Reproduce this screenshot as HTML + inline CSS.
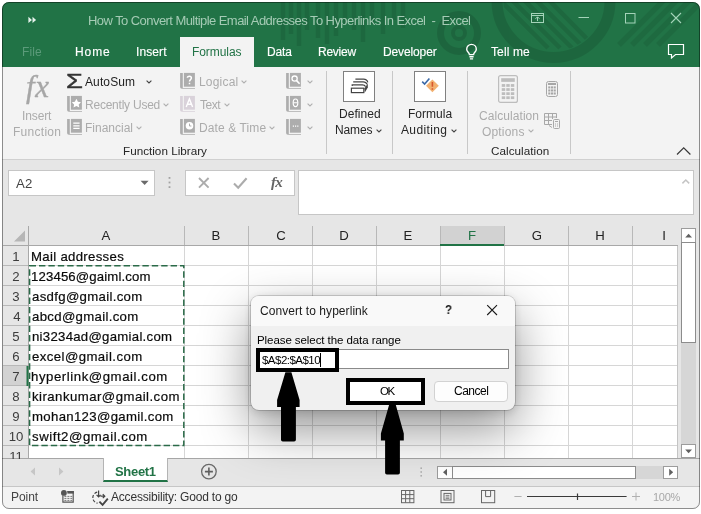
<!DOCTYPE html>
<html lang="en"><head><meta charset="utf-8"><title>How To Convert Multiple Email Addresses To Hyperlinks In Excel - Excel</title>
<style>
html,body{margin:0;padding:0;background:#fff;overflow:hidden;}
body{width:701px;height:514px;position:relative;overflow:hidden;font-family:"Liberation Sans",sans-serif;}
#win{position:absolute;left:0;top:0;width:701px;height:514px;overflow:hidden;clip-path:inset(2px 1px 5px 2px round 7px);background:#e6e6e6;}
#win div,#win span,#win svg{position:absolute;}
#win span{will-change:transform;}
#frame{position:absolute;left:2px;top:2px;width:696px;height:505px;border:1px solid rgba(0,0,0,.42);border-radius:7px;pointer-events:none;z-index:50;}
.w{background:#fff;border:1px solid #c6c6c6;box-sizing:border-box;}
.sb{background:#fff;border:1px solid #9c9c9c;box-sizing:border-box;}
</style></head><body>
<div id="win">
<div style="left:0px;top:0px;width:701px;height:67px;background:#217346;"></div>
<svg style="left:0px;top:0px;" width="701" height="67" viewBox="0 0 701 67">
<defs><clipPath id="cc"><circle cx="553.5" cy="1" r="50"/></clipPath></defs>
<g fill="none" stroke="#000" opacity="0.11">
<circle cx="553.5" cy="1" r="56.5" stroke-width="11"/>
<circle cx="459" cy="33" r="18.5" stroke-width="7"/>
<circle cx="459" cy="33" r="6" stroke-width="4"/>
</g>
<g stroke="#000" opacity="0.09" stroke-width="4.5">
<path d="M283 2V40M291 2V34M299 2V46M307 2V30M318 2V38M327 2V44M336 2V36M345 2V24M354 2V30M363 2V42M372 2V24M383 2V34M394 2V20M403 2V28"/>
<path clip-path="url(#cc)" d="M500 0L548 48M510 -2L560 48M520 -4L572 48M530 -6L584 48M541 -8L596 48" />
<path d="M664 0L619 45M677 0L632 45M690 0L645 45M703 0L658 45" stroke-width="5.5" opacity="0.8"/>
</g></svg>
<svg style="left:27px;top:14px;" width="12" height="12" viewBox="0 0 12 12"><path d="M1.4 2.7L5 5.9L1.4 9.1ZM5.5 2.7L9.1 5.9L5.5 9.1Z" fill="#e4f1ea"/></svg>
<svg style="left:529px;top:11px;" width="17" height="14" viewBox="0 0 17 14"><g fill="none" stroke="#a4d3b9" stroke-width="1"><rect x="2.5" y="2.5" width="12" height="9"/><path d="M2.5 4.5H14.5M8.5 10V6M6.5 7.8L8.5 5.8L10.5 7.8"/></g></svg>
<svg style="left:577px;top:12px;" width="14" height="12" viewBox="0 0 14 12"><path d="M1.5 5.5H12" stroke="#a4d3b9" stroke-width="1" fill="none"/></svg>
<svg style="left:623.6px;top:11.8px;" width="13" height="13" viewBox="0 0 13 13"><rect x="1.5" y="1.5" width="9.5" height="9.5" stroke="#a4d3b9" stroke-width="1" fill="none"/></svg>
<svg style="left:668.6px;top:11.4px;" width="14" height="14" viewBox="0 0 14 14"><path d="M2 2L12 12M12 2L2 12" stroke="#a4d3b9" stroke-width="1.1" fill="none"/></svg>
<div style="left:180px;top:37px;width:74px;height:30px;background:#f3f3f3;"></div>
<svg style="left:464px;top:42px;" width="16" height="20" viewBox="0 0 16 20"><g fill="none" stroke="#fff" stroke-width="1.4"><path d="M5.4 12.6C5.4 10.6 2.7 9.8 2.7 7.2A4.8 4.8 0 0 1 12.3 7.2C12.3 9.8 9.6 10.6 9.6 12.6Z"/><path d="M5.4 14.7H9.6M5.9 16.9H9.1"/></g></svg>
<svg style="left:666px;top:42px;" width="20" height="18" viewBox="0 0 20 18"><path d="M2.5 2.5H17.5V12.5H9.5L5.5 16V12.5H2.5Z" fill="none" stroke="#fff" stroke-width="1.2"/></svg>
<div style="left:0px;top:67px;width:701px;height:92px;background:#f3f3f3;"></div>
<div style="left:0px;top:159px;width:701px;height:1px;background:#d0d0d0;"></div>
<div style="left:326px;top:71px;width:1px;height:83px;background:#c8c8c8;"></div>
<div style="left:392px;top:71px;width:1px;height:83px;background:#c8c8c8;"></div>
<div style="left:467px;top:71px;width:1px;height:83px;background:#c8c8c8;"></div>
<div style="left:570px;top:71px;width:1px;height:83px;background:#c8c8c8;"></div>
<svg style="left:145px;top:78.5px;" width="8" height="6" viewBox="0 0 8 6"><path d="M1.6 1.6L4 4L6.4 1.6" fill="none" stroke="#444" stroke-width="1.1"/></svg>
<svg style="left:162px;top:101.5px;" width="8" height="6" viewBox="0 0 8 6"><path d="M1.6 1.6L4 4L6.4 1.6" fill="none" stroke="#b0b0b0" stroke-width="1.1"/></svg>
<svg style="left:135px;top:124.5px;" width="8" height="6" viewBox="0 0 8 6"><path d="M1.6 1.6L4 4L6.4 1.6" fill="none" stroke="#b0b0b0" stroke-width="1.1"/></svg>
<svg style="left:240.2px;top:78.5px;" width="8" height="6" viewBox="0 0 8 6"><path d="M1.6 1.6L4 4L6.4 1.6" fill="none" stroke="#b0b0b0" stroke-width="1.1"/></svg>
<svg style="left:223px;top:101.5px;" width="8" height="6" viewBox="0 0 8 6"><path d="M1.6 1.6L4 4L6.4 1.6" fill="none" stroke="#b0b0b0" stroke-width="1.1"/></svg>
<svg style="left:268px;top:124.5px;" width="8" height="6" viewBox="0 0 8 6"><path d="M1.6 1.6L4 4L6.4 1.6" fill="none" stroke="#b0b0b0" stroke-width="1.1"/></svg>
<svg style="left:306px;top:78.5px;" width="8" height="6" viewBox="0 0 8 6"><path d="M1.6 1.6L4 4L6.4 1.6" fill="none" stroke="#b0b0b0" stroke-width="1.1"/></svg>
<svg style="left:306px;top:101.5px;" width="8" height="6" viewBox="0 0 8 6"><path d="M1.6 1.6L4 4L6.4 1.6" fill="none" stroke="#b0b0b0" stroke-width="1.1"/></svg>
<svg style="left:306px;top:124.5px;" width="8" height="6" viewBox="0 0 8 6"><path d="M1.6 1.6L4 4L6.4 1.6" fill="none" stroke="#b0b0b0" stroke-width="1.1"/></svg>
<svg style="left:375px;top:127.5px;" width="8" height="6" viewBox="0 0 8 6"><path d="M1.6 1.6L4 4L6.4 1.6" fill="none" stroke="#444" stroke-width="1.1"/></svg>
<svg style="left:450px;top:127.5px;" width="8" height="6" viewBox="0 0 8 6"><path d="M1.6 1.6L4 4L6.4 1.6" fill="none" stroke="#444" stroke-width="1.1"/></svg>
<svg style="left:527px;top:128px;" width="8" height="6" viewBox="0 0 8 6"><path d="M1.6 1.6L4 4L6.4 1.6" fill="none" stroke="#b0b0b0" stroke-width="1.1"/></svg>
<svg style="left:66.5px;top:95px;" width="16" height="18" viewBox="0 0 16 18"><path d="M0.1 0.9H2.8V15.9H15V16.8H1.9Q0.1 16.8 0.1 15Z" fill="#adadad"/><rect x="3.9" y="0.9" width="11" height="13.8" fill="#adadad"/><g transform="translate(0,1.2)"><path d="M9.4 2.6L10.9 5.6L14 6L11.7 8.2L12.3 11.3L9.4 9.8L6.5 11.3L7.1 8.2L4.8 6L7.9 5.6Z" fill="#fff"/></g></svg>
<svg style="left:66.5px;top:118px;" width="16" height="18" viewBox="0 0 16 18"><path d="M0.1 0.9H2.8V15.9H15V16.8H1.9Q0.1 16.8 0.1 15Z" fill="#adadad"/><rect x="3.9" y="0.9" width="11" height="13.8" fill="#adadad"/><g transform="translate(0,1.2)"><g fill="none" stroke="#fff" stroke-width="1.2"><path d="M6.3 4H12.6M6.3 6.6H12.6M6.3 9.2H12.6"/></g></g></svg>
<svg style="left:180px;top:72px;" width="16" height="18" viewBox="0 0 16 18"><path d="M0.1 0.9H2.8V15.9H15V16.8H1.9Q0.1 16.8 0.1 15Z" fill="#adadad"/><rect x="3.9" y="0.9" width="11" height="13.8" fill="#adadad"/><g transform="translate(0,1.2)"><path d="M7.4 4.6C7.4 2.6 11.4 2.6 11.4 4.8C11.4 6.4 9.5 6.4 9.5 8.2M9.5 9.6V11" fill="none" stroke="#fff" stroke-width="1.5"/></g></svg>
<svg style="left:180px;top:95px;" width="16" height="18" viewBox="0 0 16 18"><path d="M0.1 0.9H2.8V15.9H15V16.8H1.9Q0.1 16.8 0.1 15Z" fill="#d9d2da"/><rect x="3.9" y="0.9" width="11" height="13.8" fill="#d9d2da"/><g transform="translate(0,1.2)"><path d="M6.2 10.8L9.4 2.8L12.6 10.8M7.4 8H11.4" fill="none" stroke="#fff" stroke-width="1.4"/></g></svg>
<svg style="left:180px;top:118px;" width="16" height="18" viewBox="0 0 16 18"><path d="M0.1 0.9H2.8V15.9H15V16.8H1.9Q0.1 16.8 0.1 15Z" fill="#adadad"/><rect x="3.9" y="0.9" width="11" height="13.8" fill="#adadad"/><g transform="translate(0,1.2)"><circle cx="9.5" cy="6.5" r="3.8" fill="#fff"/><path d="M9.5 4.4V6.8H11.4" stroke="#adadad" stroke-width="1" fill="none"/></g></svg>
<svg style="left:286px;top:72px;" width="16" height="18" viewBox="0 0 16 18"><path d="M0.1 0.9H2.8V15.9H15V16.8H1.9Q0.1 16.8 0.1 15Z" fill="#adadad"/><rect x="3.9" y="0.9" width="11" height="13.8" fill="#adadad"/><g transform="translate(0,1.2)"><circle cx="8.6" cy="5.4" r="2.6" fill="none" stroke="#fff" stroke-width="1.3"/><path d="M10.6 7.4L13.6 10.6" stroke="#fff" stroke-width="1.6"/></g></svg>
<svg style="left:286px;top:95px;" width="16" height="18" viewBox="0 0 16 18"><path d="M0.1 0.9H2.8V15.9H15V16.8H1.9Q0.1 16.8 0.1 15Z" fill="#adadad"/><rect x="3.9" y="0.9" width="11" height="13.8" fill="#adadad"/><g transform="translate(0,1.2)"><ellipse cx="9.5" cy="6.6" rx="2.3" ry="3.8" fill="none" stroke="#fff" stroke-width="1.2"/><path d="M7.4 6.6H11.6" stroke="#fff" stroke-width="1.1"/></g></svg>
<svg style="left:286px;top:118px;" width="16" height="18" viewBox="0 0 16 18"><path d="M0.1 0.9H2.8V15.9H15V16.8H1.9Q0.1 16.8 0.1 15Z" fill="#adadad"/><rect x="3.9" y="0.9" width="11" height="13.8" fill="#adadad"/><g transform="translate(0,1.2)"><path d="M6.8 7H8M9 7H10.2M11.2 7H12.4" stroke="#fff" stroke-width="1.3"/></g></svg>
<div style="left:343px;top:71px;width:32px;height:31px;background:#fff;border:1px solid #808080;box-sizing:border-box;"></div>
<svg style="left:349px;top:76px;" width="20" height="18" viewBox="0 0 20 18"><g fill="none" stroke="#444" stroke-width="1.2"><rect x="2.4" y="12.2" width="12.4" height="4.4"/><path d="M3.2 10V8.8H13.4Q15.6 8.8 16.6 10.6M4.8 6.6V5.8H14.2Q17 5.8 18 8.2M6.4 3.2H14.6Q18 3.2 18.8 6.4"/></g><path d="M15.4 12.6L18.8 7.6V11.4L15.8 16.6Z" fill="#444"/></svg>
<div style="left:414px;top:71px;width:32px;height:31px;background:#fff;border:1px solid #808080;box-sizing:border-box;"></div>
<svg style="left:419px;top:75px;" width="22" height="20" viewBox="0 0 22 20"><path d="M3.2 6.6L5.6 9L10.4 3.4" fill="none" stroke="#3c6aa8" stroke-width="1.6"/><path d="M13.4 4.4L19.8 10.8L13.4 17.2L7 10.8Z" fill="#f2b070"/><path d="M13.4 7V11.8M13.4 13.2V14.8" stroke="#d8562c" stroke-width="1.6"/></svg>
<svg style="left:498px;top:75px;" width="20" height="28" viewBox="0 0 20 28"><rect x="0.6" y="0.6" width="18.8" height="26.8" rx="2" fill="none" stroke="#bdbdbd" stroke-width="1.2"/><rect x="3.2" y="3.2" width="13.6" height="3.64" fill="#bdbdbd"/><rect x="3.74" y="9.09" width="3.45" height="2.77" fill="#bdbdbd"/><rect x="8.28" y="9.09" width="3.45" height="2.77" fill="#bdbdbd"/><rect x="12.81" y="9.09" width="3.45" height="2.77" fill="#bdbdbd"/><rect x="3.74" y="13.16" width="3.45" height="2.77" fill="#bdbdbd"/><rect x="8.28" y="13.16" width="3.45" height="2.77" fill="#bdbdbd"/><rect x="12.81" y="13.16" width="3.45" height="2.77" fill="#bdbdbd"/><rect x="3.74" y="17.23" width="3.45" height="2.77" fill="#bdbdbd"/><rect x="8.28" y="17.23" width="3.45" height="2.77" fill="#bdbdbd"/><rect x="12.81" y="17.23" width="3.45" height="2.77" fill="#bdbdbd"/><rect x="3.74" y="21.30" width="3.45" height="2.77" fill="#bdbdbd"/><rect x="8.28" y="21.30" width="3.45" height="2.77" fill="#bdbdbd"/><rect x="12.81" y="21.30" width="3.45" height="2.77" fill="#bdbdbd"/></svg>
<svg style="left:546px;top:81px;" width="12" height="16" viewBox="0 0 12 16"><rect x="0.5" y="0.5" width="11" height="15" rx="2" fill="none" stroke="#a6a6a6" stroke-width="1"/><rect x="1.92" y="1.92" width="8.16" height="2.08" fill="#a6a6a6"/><rect x="2.25" y="5.39" width="2.07" height="2.07" fill="#a6a6a6"/><rect x="4.97" y="5.39" width="2.07" height="2.07" fill="#a6a6a6"/><rect x="7.69" y="5.39" width="2.07" height="2.07" fill="#a6a6a6"/><rect x="2.25" y="8.43" width="2.07" height="2.07" fill="#a6a6a6"/><rect x="4.97" y="8.43" width="2.07" height="2.07" fill="#a6a6a6"/><rect x="7.69" y="8.43" width="2.07" height="2.07" fill="#a6a6a6"/><rect x="2.25" y="11.47" width="2.07" height="2.07" fill="#a6a6a6"/><rect x="4.97" y="11.47" width="2.07" height="2.07" fill="#a6a6a6"/><rect x="7.69" y="11.47" width="2.07" height="2.07" fill="#a6a6a6"/></svg>
<svg style="left:544px;top:113px;" width="17" height="16" viewBox="0 0 17 16"><g fill="none" stroke="#a8a8a8" stroke-width="1"><path d="M0.5 0.5H12.5V5M0.5 0.5V11.5H8M0.5 4H12.5M0.5 7.5H8M4.5 0.5V11.5M8.5 0.5V6"/><rect x="9.5" y="6.5" width="6" height="9" rx="1" fill="#f3f3f3"/><path d="M11 8.5H14M11 11H12M13 11H14M11 13H12M13 13H14"/><path d="M5 12.5L8 14.5"/></g></svg>
<svg style="left:675px;top:145px;" width="18" height="12" viewBox="0 0 18 12"><path d="M2 9.5L8.7 2.8L15.4 9.5" fill="none" stroke="#3a3a3a" stroke-width="1.2"/></svg>
<div style="left:0px;top:160px;width:701px;height:66px;background:#e6e6e6;"></div>
<div class="w" style="left:8px;top:170px;width:147px;height:26px;"></div>
<svg style="left:139px;top:179px;" width="12" height="8" viewBox="0 0 12 8"><path d="M1.6 1.8H9.6L5.6 6Z" fill="#6a6a6a"/></svg>
<svg style="left:167px;top:175px;" width="5" height="16" viewBox="0 0 5 16"><g fill="#a2a2a2"><rect x="1.6" y="2" width="1.8" height="1.8"/><rect x="1.6" y="6.6" width="1.8" height="1.8"/><rect x="1.6" y="11.2" width="1.8" height="1.8"/></g></svg>
<div class="w" style="left:185px;top:170px;width:110px;height:26px;"></div>
<svg style="left:197px;top:176px;" width="14" height="14" viewBox="0 0 14 14"><path d="M2 2L11.6 11.6M11.6 2L2 11.6" stroke="#acacac" stroke-width="1.9" fill="none"/></svg>
<svg style="left:232px;top:176px;" width="17" height="14" viewBox="0 0 17 14"><path d="M2 7.6L6.2 11.8L14.6 2.2" stroke="#acacac" stroke-width="2.1" fill="none"/></svg>
<div class="w" style="left:298px;top:170px;width:396px;height:45px;"></div>
<svg style="left:681px;top:178px;" width="10" height="7" viewBox="0 0 10 7"><path d="M1.4 5.4L4.8 2L8.2 5.4" stroke="#c4c4c4" stroke-width="1.5" fill="none"/></svg>
<div style="left:28px;top:246px;width:650px;height:212px;background:#fff;"></div>
<svg style="left:0px;top:0px;" width="701" height="514" viewBox="0 0 701 514"><path d="M28 265.5H678M28 285.5H678M28 305.5H678M28 325.5H678M28 345.5H678M28 365.5H678M28 385.5H678M28 405.5H678M28 425.5H678M28 445.5H678M184.5 246V458M248.5 246V458M312.5 246V458M376.5 246V458M440.5 246V458M504.5 246V458M568.5 246V458M632.5 246V458" stroke="#d6d6d6" stroke-width="1" fill="none"/><rect x="440" y="226" width="64" height="19" fill="#d2d2d2"/><rect x="3" y="366" width="25" height="20" fill="#d2d2d2"/><path d="M3 265.5H28M3 285.5H28M3 305.5H28M3 325.5H28M3 345.5H28M3 365.5H28M3 385.5H28M3 405.5H28M3 425.5H28M3 445.5H28M184.5 226V245M248.5 226V245M312.5 226V245M376.5 226V245M440.5 226V245M504.5 226V245M568.5 226V245M632.5 226V245" stroke="#b8b8b8" stroke-width="1" fill="none"/><path d="M677.5 246V458" stroke="#c4c4c4" stroke-width="1" fill="none"/><path d="M28.5 226V458M3 245.5H678" stroke="#a8a8a8" stroke-width="1" fill="none"/><path d="M440 245H504" stroke="#217346" stroke-width="2" fill="none"/><path d="M27.5 366V386" stroke="#217346" stroke-width="2" fill="none"/><path d="M25 230.5V241.5H14Z" fill="#b6b6b6"/><rect x="29.6" y="265.7" width="154.2" height="179.8" fill="none" stroke="#2a6a48" stroke-width="1.5" stroke-dasharray="6.4 3"/></svg>
<div style="left:681px;top:242px;width:15px;height:203px;background:#d6d6d6;"></div>
<div class="sb" style="left:681px;top:228px;width:15px;height:15px;"></div>
<svg style="left:684px;top:232px;" width="10" height="7" viewBox="0 0 10 7"><path d="M1.2 5.6H8L4.6 1.8Z" fill="#606060"/></svg>
<div class="sb" style="left:681px;top:242px;width:15px;height:101px;border-color:#8c8c8c;"></div>
<div class="sb" style="left:681px;top:444px;width:15px;height:14px;"></div>
<svg style="left:684px;top:448px;" width="10" height="7" viewBox="0 0 10 7"><path d="M1.2 1.4H8L4.6 5.2Z" fill="#606060"/></svg>
<div style="left:0px;top:458px;width:701px;height:28px;background:#e6e6e6;border-top:1px solid #a6a6a6;box-sizing:border-box;"></div>
<div style="left:103px;top:458px;width:65px;height:24.399999999999977px;background:#fff;border-left:1px solid #b4b4b4;border-right:1px solid #b4b4b4;border-bottom:2.4px solid #217346;box-sizing:border-box;"></div>
<svg style="left:29px;top:466px;" width="8" height="11" viewBox="0 0 8 11"><path d="M6 1.5V9.5L1.6 5.5Z" fill="#c6c6c6"/></svg>
<svg style="left:57px;top:466px;" width="8" height="11" viewBox="0 0 8 11"><path d="M2 1.5V9.5L6.4 5.5Z" fill="#c6c6c6"/></svg>
<svg style="left:200px;top:463px;" width="18" height="18" viewBox="0 0 18 18"><circle cx="8.9" cy="8.6" r="7.3" fill="none" stroke="#6a6a6a" stroke-width="1.3"/><path d="M4.9 8.6H12.9M8.9 4.6V12.6" stroke="#606060" stroke-width="1.6"/></svg>
<svg style="left:419px;top:466px;" width="5" height="12" viewBox="0 0 5 12"><g fill="#b0b0b0"><rect x="1.4" y="1.4" width="1.6" height="1.6"/><rect x="1.4" y="5.2" width="1.6" height="1.6"/><rect x="1.4" y="9" width="1.6" height="1.6"/></g></svg>
<div style="left:452px;top:465.5px;width:212px;height:13.5px;background:#d6d6d6;"></div>
<div class="sb" style="left:437px;top:465.5px;width:16px;height:13.5px;"></div>
<svg style="left:441px;top:468px;" width="8" height="9" viewBox="0 0 8 9"><path d="M6 0.8V7.8L2 4.3Z" fill="#606060"/></svg>
<div class="sb" style="left:452px;top:465.5px;width:184px;height:13.5px;border-color:#8c8c8c;"></div>
<div class="sb" style="left:663px;top:465.5px;width:15px;height:13.5px;"></div>
<svg style="left:667px;top:468px;" width="8" height="9" viewBox="0 0 8 9"><path d="M2.2 0.8V7.8L6.2 4.3Z" fill="#606060"/></svg>
<div style="left:0px;top:486px;width:701px;height:28px;background:#f3f3f3;border-top:1px solid #c6c6c6;box-sizing:border-box;"></div>
<svg style="left:60px;top:489px;" width="16" height="16" viewBox="0 0 16 16"><g fill="none" stroke="#555" stroke-width="1.2"><path d="M2.9 6.4V13.2H13.2V2.6H7.4"/></g><circle cx="3.9" cy="3.9" r="2.9" fill="#555"/><rect x="7.4" y="2" width="6.4" height="2.6" fill="#555"/><g stroke="#6a6a6a" stroke-width="0.9"><path d="M4.4 7.4H6.4M7.4 7.4H9.4M10.4 7.4H12.2M4.4 9.4H6.4M7.4 9.4H9.4M10.4 9.4H12.2M4.4 11.4H6.4M7.4 11.4H9.4M10.4 11.4H12.2"/></g></svg>
<svg style="left:90px;top:488.7px;" width="20" height="18" viewBox="0 0 20 18"><g fill="none" stroke="#444" stroke-width="1.2"><path d="M7.2 3.2A5.6 5.6 0 0 0 7.6 14.2" stroke-dasharray="3 1.7"/><path d="M8.6 1.6V7.6M6.6 5.8L8.6 7.8L10.6 5.8"/><path d="M10.4 7.2H14.4M12.8 5.2L14.8 7.2L12.8 9.2"/><path d="M9.4 12.6L12.6 15.8L17.8 9.6" stroke-width="1.9"/></g></svg>
<svg style="left:401px;top:490px;" width="14" height="14" viewBox="0 0 14 14"><g fill="none" stroke="#666" stroke-width="1"><rect x="0.5" y="0.5" width="12.4" height="12.2"/><path d="M0.5 4.6H12.9M0.5 8.7H12.9M4.6 0.5V12.7M8.8 0.5V12.7"/></g></svg>
<svg style="left:440px;top:490px;" width="16" height="14" viewBox="0 0 16 14"><g fill="none" stroke="#666" stroke-width="1"><rect x="1" y="0.5" width="13" height="12.2"/><rect x="4" y="3.4" width="7" height="6.6"/><path d="M5.6 5.4H9.4M5.6 7H9.4M5.6 8.4H9.4" stroke-width="0.8"/></g></svg>
<svg style="left:481px;top:490px;" width="15" height="14" viewBox="0 0 15 14"><g fill="none" stroke="#666" stroke-width="1"><rect x="0.5" y="0.5" width="13.2" height="12.2"/><path d="M4.6 0.5V6.6H9.6V0.5"/></g></svg>
<svg style="left:512px;top:490px;" width="130" height="14" viewBox="0 0 130 14"><path d="M2.4 6.5H9.6" stroke="#b0b0b0" stroke-width="1"/><path d="M15 6.5H114.6" stroke="#3a3a3a" stroke-width="1"/><path d="M65.5 3.4V10" stroke="#3a3a3a" stroke-width="1.2"/><path d="M120 6.5H128M124 2.5V10.5" stroke="#b0b0b0" stroke-width="1"/></svg>
<div style="left:251px;top:296px;width:264px;height:114px;background:#f0f0f0;border-radius:8px;box-shadow:0 0 0 1px rgba(0,0,0,.16),0 19px 50px rgba(0,0,0,.43),0 2px 10px rgba(0,0,0,.14);z-index:10;overflow:hidden;"><div style="left:0;top:0;width:264px;height:30px;background:#f9f9f9;"></div></div>
<svg style="left:485px;top:303px;z-index:20;" width="14" height="14" viewBox="0 0 14 14"><path d="M2.2 2.2L12 12M12 2.2L2.2 12" stroke="#1a1a1a" stroke-width="1.1" fill="none"/></svg>
<div style="left:257px;top:349px;width:252px;height:20px;background:#fff;border:1px solid #8a8a8a;box-sizing:border-box;z-index:12;"></div>
<div style="left:434.4px;top:380.5px;width:73.20000000000005px;height:21.0px;background:#fdfdfd;border:1px solid #d2d2d2;border-radius:4px;box-sizing:border-box;z-index:12;"></div>
<div style="left:256px;top:348.4px;width:83px;height:24.0px;border:4.3px solid #000;background:#fff;box-sizing:border-box;z-index:14;"></div>
<div style="left:346px;top:377.6px;width:79.19999999999999px;height:27.299999999999955px;border:4.5px solid #000;background:#fff;box-sizing:border-box;z-index:14;"></div>
<div style="left:319.5px;top:353px;width:1.0px;height:14px;background:#000;z-index:21;"></div>
<svg style="left:0px;top:0px;z-index:30;" width="701" height="514" viewBox="0 0 701 514"><path d="M285.4 372.3H291.4L299.6 400V407H295.9V439.8Q295.9 441.6 294.1 441.6H282.8Q281 441.6 281 439.8V407H277.1V400Z" fill="#000"/><path d="M389.2 404.6H395.7L403.8 433.6V440.4H399.9V472.8Q399.9 474.6 398.1 474.6H386.9Q385.1 474.6 385.1 472.8V440.4H380.9V433.6Z" fill="#000"/></svg>
<span id="t0" style="position:absolute;top:14px;font-size:13px;line-height:1;color:#a5cbb5;white-space:pre;left:88.40px;letter-spacing:-0.563px;white-space:pre;">How To Convert Multiple Email Addresses To Hyperlinks In Excel  -  Excel</span>
<span id="t1" style="position:absolute;top:46px;font-size:12px;line-height:1;color:#5b9b7a;white-space:pre;left:22.40px;letter-spacing:0.081px;">File</span>
<span id="t2" style="position:absolute;top:46px;font-size:12px;line-height:1;color:#fff;white-space:pre;left:75.40px;letter-spacing:0.906px;-webkit-text-stroke:0.15px #fff;">Home</span>
<span id="t3" style="position:absolute;top:46px;font-size:12px;line-height:1;color:#fff;white-space:pre;left:135.91px;letter-spacing:0.106px;-webkit-text-stroke:0.15px #fff;">Insert</span>
<span id="t4" style="position:absolute;top:46px;font-size:12px;line-height:1;color:#217346;white-space:pre;left:192.40px;letter-spacing:-0.075px;">Formulas</span>
<span id="t5" style="position:absolute;top:46px;font-size:12px;line-height:1;color:#fff;white-space:pre;left:267.40px;letter-spacing:-0.135px;-webkit-text-stroke:0.15px #fff;">Data</span>
<span id="t6" style="position:absolute;top:46px;font-size:12px;line-height:1;color:#fff;white-space:pre;left:318.40px;letter-spacing:-0.244px;-webkit-text-stroke:0.15px #fff;">Review</span>
<span id="t7" style="position:absolute;top:46px;font-size:12px;line-height:1;color:#fff;white-space:pre;left:383.40px;letter-spacing:-0.122px;-webkit-text-stroke:0.15px #fff;">Developer</span>
<span id="t8" style="position:absolute;top:46px;font-size:12px;line-height:1;color:#fff;white-space:pre;left:491.43px;letter-spacing:0.118px;-webkit-text-stroke:0.15px #fff;">Tell me</span>
<span id="t9" style="position:absolute;top:71px;font-size:31px;line-height:1;color:#a6a6a6;white-space:pre;font-style:italic;font-family:'Liberation Serif', serif;left:26.42px;letter-spacing:0.705px;-webkit-text-stroke:0.35px #a6a6a6;">fx</span>
<span id="t10" style="position:absolute;top:110px;font-size:12px;line-height:1;color:#ababab;white-space:pre;left:22.25px;letter-spacing:-0.125px;">Insert</span>
<span id="t11" style="position:absolute;top:126px;font-size:12px;line-height:1;color:#ababab;white-space:pre;left:13.40px;letter-spacing:0.278px;">Function</span>
<span id="t12" style="position:absolute;top:71px;font-size:20.5px;line-height:1;color:#333;white-space:pre;left:65.72px;transform:scaleX(1.336);transform-origin:0 0;-webkit-text-stroke:0.45px #333;">Σ</span>
<span id="t13" style="position:absolute;top:76px;font-size:12px;line-height:1;color:#1e1e1e;white-space:pre;left:85.28px;letter-spacing:0.117px;">AutoSum</span>
<span id="t14" style="position:absolute;top:99px;font-size:12px;line-height:1;color:#ababab;white-space:pre;left:84.90px;letter-spacing:-0.229px;">Recently Used</span>
<span id="t15" style="position:absolute;top:122px;font-size:12px;line-height:1;color:#ababab;white-space:pre;left:84.90px;letter-spacing:0.001px;">Financial</span>
<span id="t16" style="position:absolute;top:76px;font-size:12px;line-height:1;color:#ababab;white-space:pre;left:199.40px;letter-spacing:0.192px;">Logical</span>
<span id="t17" style="position:absolute;top:99px;font-size:12px;line-height:1;color:#ababab;white-space:pre;left:199.59px;letter-spacing:-0.438px;">Text</span>
<span id="t18" style="position:absolute;top:122px;font-size:12px;line-height:1;color:#ababab;white-space:pre;left:199.40px;letter-spacing:0.105px;">Date &amp; Time</span>
<span id="t19" style="position:absolute;top:145px;font-size:11.7px;line-height:1;color:#262626;white-space:pre;left:122.90px;letter-spacing:0.007px;">Function Library</span>
<span id="t20" style="position:absolute;top:108px;font-size:12px;line-height:1;color:#262626;white-space:pre;left:339.40px;letter-spacing:0.063px;">Defined</span>
<span id="t21" style="position:absolute;top:124px;font-size:12px;line-height:1;color:#262626;white-space:pre;left:335.40px;letter-spacing:-0.132px;">Names</span>
<span id="t22" style="position:absolute;top:108px;font-size:12px;line-height:1;color:#262626;white-space:pre;left:407.90px;letter-spacing:0.016px;">Formula</span>
<span id="t23" style="position:absolute;top:124px;font-size:12px;line-height:1;color:#262626;white-space:pre;left:401.28px;letter-spacing:0.362px;">Auditing</span>
<span id="t24" style="position:absolute;top:110px;font-size:12px;line-height:1;color:#ababab;white-space:pre;left:478.99px;letter-spacing:0.066px;">Calculation</span>
<span id="t25" style="position:absolute;top:126px;font-size:12px;line-height:1;color:#ababab;white-space:pre;left:482.18px;letter-spacing:0.172px;">Options</span>
<span id="t26" style="position:absolute;top:145px;font-size:11.7px;line-height:1;color:#262626;white-space:pre;left:491.02px;letter-spacing:0.037px;">Calculation</span>
<span id="t27" style="position:absolute;top:177px;font-size:13.2px;line-height:1;color:#444;white-space:pre;left:15.69px;letter-spacing:0.193px;">A2</span>
<span id="t28" style="position:absolute;top:175px;font-size:15px;line-height:1;color:#666;white-space:pre;font-weight:700;font-style:italic;font-family:'Liberation Serif', serif;left:270.87px;letter-spacing:-0.634px;">fx</span>
<span id="t29" style="position:absolute;top:229px;font-size:13.2px;line-height:1;color:#222;white-space:pre;left:56.08px;width:100px;text-align:center;">A</span>
<span id="t30" style="position:absolute;top:229px;font-size:13.2px;line-height:1;color:#222;white-space:pre;left:166.28px;width:100px;text-align:center;">B</span>
<span id="t31" style="position:absolute;top:229px;font-size:13.2px;line-height:1;color:#222;white-space:pre;left:230.88px;width:100px;text-align:center;">C</span>
<span id="t32" style="position:absolute;top:229px;font-size:13.2px;line-height:1;color:#222;white-space:pre;left:293.96px;width:100px;text-align:center;">D</span>
<span id="t33" style="position:absolute;top:229px;font-size:13.2px;line-height:1;color:#222;white-space:pre;left:357.83px;width:100px;text-align:center;">E</span>
<span id="t34" style="position:absolute;top:229px;font-size:13.2px;line-height:1;color:#217346;white-space:pre;left:422.34px;width:100px;text-align:center;">F</span>
<span id="t35" style="position:absolute;top:229px;font-size:13.2px;line-height:1;color:#222;white-space:pre;left:486.71px;width:100px;text-align:center;">G</span>
<span id="t36" style="position:absolute;top:229px;font-size:13.2px;line-height:1;color:#222;white-space:pre;left:550.43px;width:100px;text-align:center;">H</span>
<span id="t37" style="position:absolute;top:229px;font-size:13.2px;line-height:1;color:#222;white-space:pre;left:614.19px;width:100px;text-align:center;">I</span>
<span id="t38" style="position:absolute;top:250px;font-size:13.2px;line-height:1;color:#3c3c3c;white-space:pre;left:-34.37px;width:100px;text-align:center;">1</span>
<span id="t39" style="position:absolute;top:250px;font-size:13.2px;line-height:1;color:#0a0a0a;white-space:pre;left:31.40px;letter-spacing:0.313px;-webkit-text-stroke:0.2px #0a0a0a;">Mail addresses</span>
<span id="t40" style="position:absolute;top:270px;font-size:13.2px;line-height:1;color:#3c3c3c;white-space:pre;left:-34.00px;width:100px;text-align:center;">2</span>
<span id="t41" style="position:absolute;top:270px;font-size:13.2px;line-height:1;color:#0a0a0a;white-space:pre;left:31.40px;letter-spacing:0.135px;-webkit-text-stroke:0.2px #0a0a0a;">123456@gaiml.com</span>
<span id="t42" style="position:absolute;top:290px;font-size:13.2px;line-height:1;color:#3c3c3c;white-space:pre;left:-34.00px;width:100px;text-align:center;">3</span>
<span id="t43" style="position:absolute;top:290px;font-size:13.2px;line-height:1;color:#0a0a0a;white-space:pre;left:31.56px;letter-spacing:0.323px;-webkit-text-stroke:0.2px #0a0a0a;">asdfg@gmail.com</span>
<span id="t44" style="position:absolute;top:310px;font-size:13.2px;line-height:1;color:#3c3c3c;white-space:pre;left:-33.46px;width:100px;text-align:center;">4</span>
<span id="t45" style="position:absolute;top:310px;font-size:13.2px;line-height:1;color:#0a0a0a;white-space:pre;left:31.56px;letter-spacing:0.320px;-webkit-text-stroke:0.2px #0a0a0a;">abcd@gmail.com</span>
<span id="t46" style="position:absolute;top:330px;font-size:13.2px;line-height:1;color:#3c3c3c;white-space:pre;left:-34.00px;width:100px;text-align:center;">5</span>
<span id="t47" style="position:absolute;top:330px;font-size:13.2px;line-height:1;color:#0a0a0a;white-space:pre;left:31.55px;letter-spacing:0.273px;-webkit-text-stroke:0.2px #0a0a0a;">ni3234ad@gamial.com</span>
<span id="t48" style="position:absolute;top:350px;font-size:13.2px;line-height:1;color:#3c3c3c;white-space:pre;left:-34.00px;width:100px;text-align:center;">6</span>
<span id="t49" style="position:absolute;top:350px;font-size:13.2px;line-height:1;color:#0a0a0a;white-space:pre;left:31.65px;letter-spacing:0.419px;-webkit-text-stroke:0.2px #0a0a0a;">excel@gmail.com</span>
<span id="t50" style="position:absolute;top:370px;font-size:13.2px;line-height:1;color:#3c3c3c;white-space:pre;left:-34.00px;width:100px;text-align:center;">7</span>
<span id="t51" style="position:absolute;top:370px;font-size:13.2px;line-height:1;color:#0a0a0a;white-space:pre;left:31.45px;letter-spacing:0.557px;-webkit-text-stroke:0.2px #0a0a0a;">hyperlink@gmail.com</span>
<span id="t52" style="position:absolute;top:390px;font-size:13.2px;line-height:1;color:#3c3c3c;white-space:pre;left:-34.00px;width:100px;text-align:center;">8</span>
<span id="t53" style="position:absolute;top:390px;font-size:13.2px;line-height:1;color:#0a0a0a;white-space:pre;left:31.64px;letter-spacing:0.461px;-webkit-text-stroke:0.2px #0a0a0a;">kirankumar@gmail.com</span>
<span id="t54" style="position:absolute;top:410px;font-size:13.2px;line-height:1;color:#3c3c3c;white-space:pre;left:-34.00px;width:100px;text-align:center;">9</span>
<span id="t55" style="position:absolute;top:410px;font-size:13.2px;line-height:1;color:#0a0a0a;white-space:pre;left:31.55px;letter-spacing:0.324px;-webkit-text-stroke:0.2px #0a0a0a;">mohan123@gamil.com</span>
<span id="t56" style="position:absolute;top:430px;font-size:13.2px;line-height:1;color:#3c3c3c;white-space:pre;left:-34.13px;width:100px;text-align:center;">10</span>
<span id="t57" style="position:absolute;top:430px;font-size:13.2px;line-height:1;color:#0a0a0a;white-space:pre;left:31.56px;letter-spacing:0.542px;-webkit-text-stroke:0.2px #0a0a0a;">swift2@gmail.com</span>
<span id="t58" style="position:absolute;top:450px;font-size:13.2px;line-height:1;color:#3c3c3c;white-space:pre;left:-33.79px;width:100px;text-align:center;clip-path:inset(0 0 5.2px 0);">11</span>
<span id="t59" style="position:absolute;top:465px;font-size:13px;line-height:1;color:#217346;white-space:pre;font-weight:700;left:115.12px;letter-spacing:-0.309px;">Sheet1</span>
<span id="t60" style="position:absolute;top:491px;font-size:12px;line-height:1;color:#444;white-space:pre;left:11.40px;letter-spacing:-0.043px;">Point</span>
<span id="t61" style="position:absolute;top:491px;font-size:12px;line-height:1;color:#333;white-space:pre;left:110.78px;letter-spacing:-0.196px;">Accessibility: Good to go</span>
<span id="t62" style="position:absolute;top:492px;font-size:11px;line-height:1;color:#a8a8a8;white-space:pre;left:653.49px;letter-spacing:-0.301px;">100%</span>
<span id="t63" style="position:absolute;top:305px;font-size:12px;line-height:1;color:#1a1a1a;white-space:pre;z-index:20;left:260.49px;letter-spacing:0.059px;">Convert to hyperlink</span>
<span id="t64" style="position:absolute;top:304px;font-size:12.5px;line-height:1;color:#111;white-space:pre;font-weight:700;z-index:20;left:444.52px;transform:scaleX(0.914);transform-origin:0 0;">?</span>
<span id="t65" style="position:absolute;top:335px;font-size:11.5px;line-height:1;color:#000;white-space:pre;z-index:20;left:256.90px;letter-spacing:-0.073px;">Please select the data range</span>
<span id="t66" style="position:absolute;top:355px;font-size:11.5px;line-height:1;color:#000;white-space:pre;z-index:20;left:261.89px;letter-spacing:-0.522px;">$A$2:$A$10</span>
<span id="t67" style="position:absolute;top:386px;font-size:11.5px;line-height:1;color:#000;white-space:pre;z-index:20;left:380.24px;letter-spacing:-1.447px;">OK</span>
<span id="t68" style="position:absolute;top:385px;font-size:12px;line-height:1;color:#000;white-space:pre;z-index:20;left:454.49px;letter-spacing:-0.500px;">Cancel</span>
</div>
<div id="frame"></div>
</body></html>
